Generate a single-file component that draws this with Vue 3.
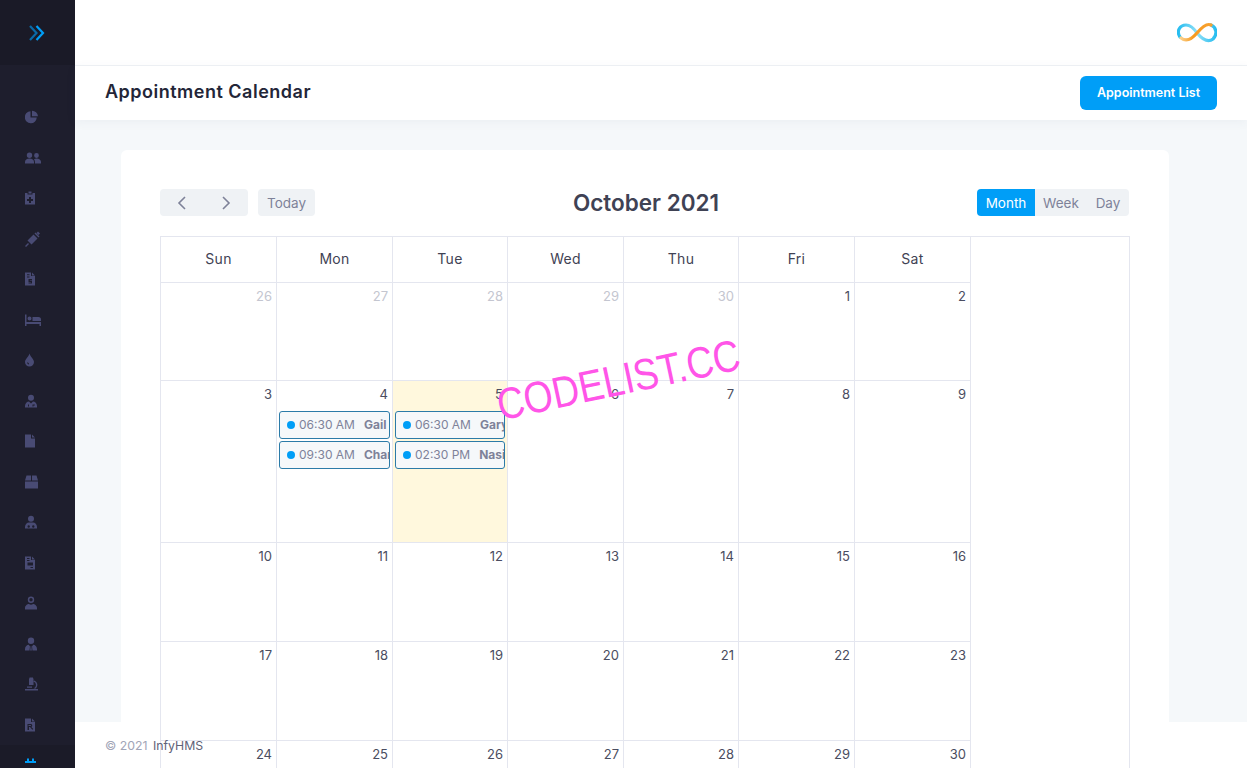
<template>
  <div class="page">
    <aside class="sidebar">
      <div class="brand">
        <svg width="16" height="16" viewBox="0 0 16 16" fill="none">
          <path d="M1 1l6.5 7L1 15" stroke="#0a6aa8" stroke-width="2.2" />
          <path d="M7.5 1L14 8l-6.5 7" stroke="#009ef7" stroke-width="2.2" />
        </svg>
      </div>
      <nav class="menu">
        <div v-for="(icon, i) in icons" :key="i" class="menu-item" :class="{ active: i === icons.length - 1 }">
          <svg width="16" height="16" viewBox="0 0 16 16">
            <path :d="icon" fill-rule="evenodd" />
          </svg>
        </div>
      </nav>
    </aside>

    <main class="main">
      <header class="topbar">
        <svg width="40" height="21" viewBox="0 0 40 21" fill="none" stroke-width="3.2" stroke-linecap="round">
          <defs>
            <linearGradient id="loop" x1="0" x2="1" y1="0" y2="0">
              <stop offset="0" stop-color="#27bdf0" />
              <stop offset=".5" stop-color="#8fe0f7" />
              <stop offset="1" stop-color="#27bdf0" />
            </linearGradient>
            <linearGradient id="band" x1="0" x2="1" y1="0" y2="0">
              <stop offset="0" stop-color="#fbd08a" />
              <stop offset=".4" stop-color="#f79a1f" />
              <stop offset="1" stop-color="#f7a130" />
            </linearGradient>
          </defs>
          <path d="M3 15C-1 9 3 3 9 3c5 0 9 5 11 8 5 6 11 10 16 6 5-5 3-12-2-14" stroke="url(#loop)" />
          <path d="M4 16c5 4 10 2 16-5 5-6 10-10 14-8" stroke="url(#band)" />
        </svg>
      </header>
      <div class="subbar">
        <h1>Appointment Calendar</h1>
        <button class="primary">Appointment List</button>
      </div>

      <section class="content">
        <div class="card">
          <div class="toolbar">
            <div class="toolbar-left">
              <div class="btn-group">
                <button class="tool-btn arrow">
                  <svg width="10" height="14" viewBox="0 0 10 14" fill="none"><path d="M8 1L2 7l6 6" stroke="#7e8299" stroke-width="1.6" /></svg>
                </button>
                <button class="tool-btn arrow">
                  <svg width="10" height="14" viewBox="0 0 10 14" fill="none"><path d="M2 1l6 6-6 6" stroke="#7e8299" stroke-width="1.6" /></svg>
                </button>
              </div>
              <button class="tool-btn today-btn">Today</button>
            </div>
            <h2>October 2021</h2>
            <div class="btn-group views">
              <button class="tool-btn view on">Month</button>
              <button class="tool-btn view">Week</button>
              <button class="tool-btn view">Day</button>
            </div>
          </div>

          <div class="calendar">
            <div class="grid">
              <div v-for="d in weekdays" :key="d" class="head-cell">{{ d }}</div>
              <div v-for="day in days" :key="day.key" class="day" :class="{ today: day.today }">
                <div class="num" :class="{ other: day.other }">{{ day.n }}</div>
                <div v-for="e in day.events" :key="e.time" class="event">
                  <span class="dot"></span>
                  <span class="time">{{ e.time }}</span>
                  <b>{{ e.name }}</b>
                </div>
              </div>
            </div>
          </div>
        </div>
      </section>

      <div class="footer-bg"></div>
      <div class="footer-text"><span>© 2021</span> <a>InfyHMS</a></div>
    </main>

    <div class="watermark">CODELIST.CC</div>
  </div>
</template>

<script setup>
const c = (x, y, r) => `M${x - r} ${y}a${r} ${r} 0 1 0 ${r * 2} 0a${r} ${r} 0 1 0 ${-r * 2} 0z`

const icons = [
  // pie
  'M5.5 2.2A6 6 0 1 0 11.8 8.6H5.5z M7 1.8A6 6 0 0 1 13 7.2H7z',
  // users
  c(4.5, 5.2, 2.7) + c(11.5, 5.5, 2.4) + 'M0 13.5V12c0-2 1.8-3.5 4.5-3.5S9 10 9 12v1.5z M10 13.5V12c0-1-.4-2-1-2.8.8-.5 1.7-.8 2.5-.8 2.5 0 4.5 1.5 4.5 3.4v1.7z',
  // clipboard
  'M0 3h2.5v1.5h5V3H10v11.5H0z M3.5 1.5h3V3.6h-3z M4 7h2v2h2v2H6v2H4v-2H2V9h2z',
  // syringe
  'M0 15l3-3 1 1-3 3z M2.5 9.5l6-6 4 4-6 6z M9.5 2.5l1-1 4 4-1 1z M11.5 2l1.5-1.5 2 2L13.5 4z',
  // invoice
  'M0 1.5h6V5h4v9.5H0z M7 1.5l3 3H7z M2 3.2h2.5v1H2z M2 5.4h2.5v1H2z M3.5 8H7v1H4.8v.5H7v3H3.5v-1h2.3V11H3.5z',
  // bed
  'M0 2.5h1.5V10H16v4h-1.5v-2h-13v2H0z M7.5 5h6A2.5 2.5 0 0 1 16 7.5V9H7.5z' + c(4.5, 6.5, 2),
  // drop
  'M4.5 1.5C5.5 5 9 7 9 10a4.5 4.5 0 0 1-9 0C0 7 3.5 5 4.5 1.5z M2 10.5c.2 1 1 1.8 2 2v-1c-.5-.2-.9-.6-1-1z',
  // doctor
  c(6, 4.7, 3) + 'M0 14.5V13c0-2.5 2-4.5 4-4.5l2 2 2-2c2 0 4 2 4 4.5v1.5z M3 11.5h1v2H3z M7.5 11.5h2.3v1h-1.300v1h-1z',
  // file
  'M0 1.5h6v4h4v9H0z M7 1.5l3 3H7z',
  // box
  'M0 6.5L1.5 1.5H6v5z M7 1.5h4.5L13 6.5H7z M0 7.5h13v7H0z',
  // doctor 2
  c(6, 4.7, 3) + 'M0 14.5V13c0-2.5 2-4.5 4-4.5h4c2 0 4 2 4 4.5v1.5z' + c(3.7, 12.5, 1.2) + c(8.3, 12.5, 1.2),
  // report
  'M0 1.5h6V5h4v9.5H0z M7 1.5l3 3H7z M2 3h2.5v1H2z M2 5h2.5v1H2z M2.5 7.5H8v3H2.5z M5.5 12H8v1H5.5z',
  // nurse
  c(6, 4.7, 3.2) + c(6, 4.7, 1.7) + 'M0 14.5V13c0-2.5 2.5-4 4-4 .5.5 1.2.8 2 .8s1.5-.3 2-.8c1.5 0 4 1.5 4 4v1.5z',
  // user tie
  c(6, 4.7, 3.2) + 'M0 14.5V13c0-2.5 2-4.2 3.8-4.2L5 10.5 4.5 14.5z M7.5 14.5L7 10.5l1.2-1.7C10 8.8 12 10.5 12 13v1.5z M5.7 10h.6l.5 4.5H5.2z',
  // microscope
  'M4.5 1.5H8v1h.5V9H4V2.5h.5z M0 13h13v1.5H0z M9.5 4.5a5 5 0 0 1 1.5 8H8.5a3.7 3.7 0 0 0 0-7z M2 10.5h5v1.3H2z',
  // rx
  'M0 1.5h6V5h4v9.5H0z M7 1.5l3 3H7z M2.5 7h3.2a1.5 1.5 0 0 1 .6 2.9l2 2.1-.9.8-2.4-2.7h-1V13h-1.500z M3.500 8v1h2a.5.5 0 0 0 0-1z',
  // calendar, cut off by the window
  'M2 1.5h2V4h3V1.5h2V4h2v2H0V4h2z'
]

const weekdays = ['Sun', 'Mon', 'Tue', 'Wed', 'Thu', 'Fri', 'Sat']

const events = {
  4: [{ time: '06:30 AM', name: 'Gail Roberts' }, { time: '09:30 AM', name: 'Charles Hall' }],
  5: [{ time: '06:30 AM', name: 'Gary Wilson' }, { time: '02:30 PM', name: 'Nasir Khan' }]
}

const days = [
  ...[26, 27, 28, 29, 30].map(n => ({ key: 'p' + n, n, other: true })),
  ...Array.from({ length: 30 }, (_, i) => ({
    key: 'd' + (i + 1),
    n: i + 1,
    today: i + 1 === 5,
    events: events[i + 1] || []
  }))
]
</script>

<style scoped>
.page {
  position: relative;
  display: flex;
  height: 768px;
  overflow: hidden;
  font-family: Inter, "Liberation Sans", sans-serif;
  color: #3f4254;
}

.sidebar {
  width: 75px;
  flex-shrink: 0;
  background: #1e1e2d;
  overflow: hidden;
}

.brand {
  height: 65px;
  background: #1a1a27;
  display: flex;
  align-items: center;
  padding-left: 29px;
}

.menu {
  padding-top: 32px;
}

.menu-item {
  height: 40.5px;
  padding-left: 25px;
  display: flex;
  align-items: center;
  fill: #494b74;
}

.menu-item.active {
  background: #1b1b28;
  fill: #009ef7;
}

.main {
  position: relative;
  flex: 1;
  min-width: 0;
  display: flex;
  flex-direction: column;
  background: #fff;
}

.topbar {
  height: 65px;
  flex-shrink: 0;
  border-bottom: 1px solid #eff2f5;
  display: flex;
  align-items: center;
  justify-content: flex-end;
  padding: 0 30px 0 0;
}

.subbar {
  height: 54px;
  flex-shrink: 0;
  padding: 0 30px;
  display: flex;
  align-items: center;
  justify-content: space-between;
  box-shadow: 0 2px 10px rgba(76, 87, 125, .06);
  position: relative;
}

h1 {
  margin: 0 0 4px;
  font-size: 18px;
  font-weight: 600;
  letter-spacing: .5px;
  color: #232638;
}

.primary {
  width: 137px;
  height: 34px;
  border: 0;
  border-radius: 6px;
  padding: 0 0 2px;
  background: #009ef7;
  color: #fff;
  font: 600 12.5px Inter, sans-serif;
}

.content {
  flex: 1;
  min-height: 0;
  background: #f5f8fa;
  padding: 30px 78px 0 46px;
}

.card {
  position: relative;
  z-index: 2;
  background: #fff;
  border-radius: 6px;
  padding: 39px 39px 0;
}

.toolbar {
  display: flex;
  align-items: center;
  justify-content: space-between;
  margin-bottom: 20px;
}

.toolbar-left {
  display: flex;
  gap: 10px;
}

h2 {
  margin: 0;
  font-size: 22.5px;
  line-height: 27px;
  font-weight: 600;
  color: #3f4254;
}

.btn-group {
  display: flex;
  border-radius: 4px;
  overflow: hidden;
}

.views {
  margin-right: 1px;
}

.tool-btn {
  height: 27px;
  border: 0;
  padding: 0;
  background: #eff2f5;
  color: #7e8299;
  font: 400 13.5px Inter, sans-serif;
  display: flex;
  align-items: center;
  justify-content: center;
}

.arrow {
  width: 44px;
}

.today-btn {
  width: 57px;
  border-radius: 4px;
}

.view {
  width: 52px;
}

.view:last-child {
  width: 42px;
}

.view.on {
  width: 58px;
  background: #009ef7;
  color: #fff;
}

.calendar {
  border: 1px solid #e4e6ef;
  height: 700px;
}

.grid {
  width: 810px;
  display: grid;
  grid-template-columns: 116px 116px 115px 116px 115px 116px 116px;
  grid-template-rows: 46px 98px 162px 99px 99px 99px;
}

.head-cell {
  border-right: 1px solid #e4e6ef;
  border-bottom: 1px solid #e4e6ef;
  padding-bottom: 2px;
  display: flex;
  align-items: center;
  justify-content: center;
  font-size: 14px;
  font-weight: 400;
  letter-spacing: .3px;
}

.day {
  min-width: 0;
  border-right: 1px solid #e4e6ef;
  border-bottom: 1px solid #e4e6ef;
}

.day.today {
  background: #fff8dd;
}

.num {
  height: 30px;
  padding: 5px 4px 0 0;
  box-sizing: border-box;
  text-align: right;
  font-size: 13px;
  line-height: 16px;
  color: #4a4d60;
}

.num.other {
  color: #c4c6d0;
}

.event {
  height: 28px;
  box-sizing: border-box;
  margin: 0 2px 2px;
  padding: 0 0 1px 7px;
  border: 1px solid #2b7ba8;
  border-radius: 3px;
  background: #f5f8fa;
  display: flex;
  align-items: center;
  overflow: hidden;
  white-space: nowrap;
  font-size: 12px;
  color: #7e8299;
}

.dot {
  width: 8px;
  height: 8px;
  flex-shrink: 0;
  border-radius: 50%;
  background: #009ef7;
  margin-right: 4px;
}

.event b {
  margin-left: 9px;
  font-weight: 700;
}

.footer-bg {
  position: absolute;
  z-index: 1;
  left: 0;
  right: 0;
  bottom: 0;
  height: 46px;
  background: #fff;
}

.footer-text {
  position: absolute;
  z-index: 3;
  left: 30px;
  bottom: 15px;
  font-size: 12.3px;
  color: #a1a5b7;
}

.footer-text a {
  margin-left: 2px;
  color: #5e6278;
}

.watermark {
  position: absolute;
  z-index: 4;
  left: 473px;
  top: 355px;
  font: 44px "Liberation Sans", sans-serif;
  color: #ff55e8;
  white-space: nowrap;
  transform: rotate(-12deg) scaleX(.85);
}
</style>

<style>
html, body {
  overflow: hidden;
}
</style>
